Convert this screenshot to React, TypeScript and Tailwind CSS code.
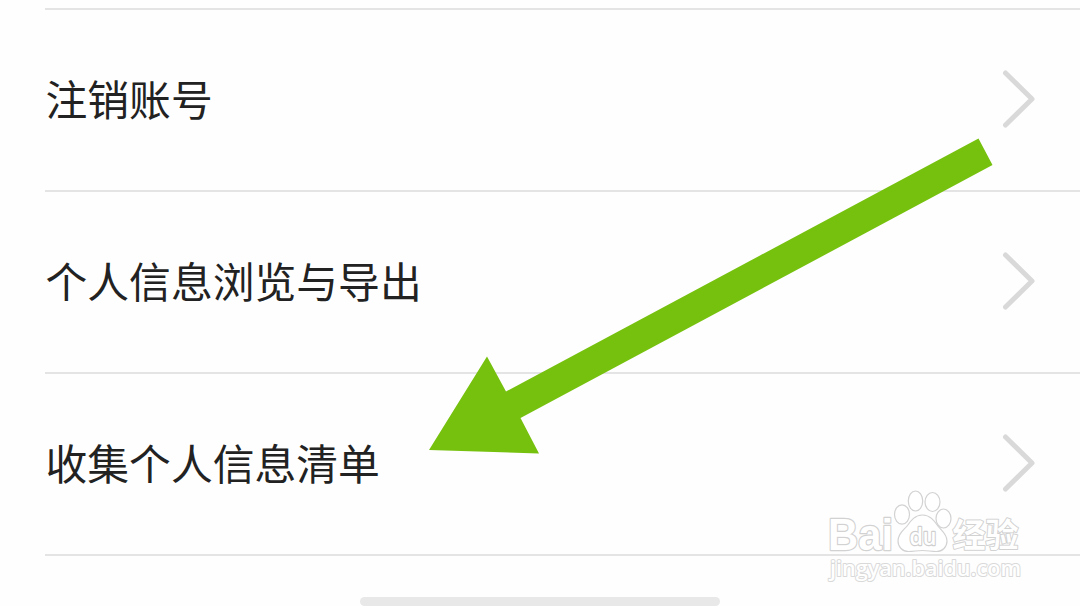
const rows = ["注销账号", "个人信息浏览与导出", "收集个人信息清单"];

function Chevron() {
  return (
    <svg className="w-10 h-16 shrink-0" viewBox="0 0 40 64" fill="none">
      <path
        d="M5.5 5L32 31L5.5 57"
        stroke="#d9d9d9"
        strokeWidth="5"
        strokeLinecap="round"
        strokeLinejoin="round"
      />
    </svg>
  );
}

function Row({ label }: { label: string }) {
  return (
    <div className="flex h-[182px] items-center justify-between border-b-2 border-[#e4e4e4] pr-10">
      <span className="pb-0.5 pl-[0.5px] text-[41.8px] leading-none text-[#222]">
        {label}
      </span>
      <Chevron />
    </div>
  );
}

function Arrow() {
  return (
    <svg
      className="absolute inset-0 h-[606px] w-[1080px]"
      viewBox="0 0 1080 606"
    >
      <path
        d="M429 450L487 356.5L506 391.5L978.5 138.5L992.5 165L520.5 418L539 453.5Z"
        fill="#76c10e"
      />
    </svg>
  );
}

function Watermark() {
  return (
    <svg
      className="absolute left-[810px] top-[480px] h-[110px] w-[230px]"
      viewBox="0 0 230 110"
    >
      <g
        className="font-['Liberation_Sans','Noto_Sans_CJK_SC',sans-serif] font-bold"
        fill="#fff"
        stroke="#d2d2d2"
        strokeWidth="2.4"
        strokeLinejoin="round"
        paintOrder="stroke"
      >
        <text x="18" y="70" fontSize="44" textLength="65" lengthAdjust="spacingAndGlyphs">Bai</text>
        <text x="142.5" y="67" fontSize="33" strokeWidth="2" textLength="66" lengthAdjust="spacingAndGlyphs">经验</text>
      </g>
      <g fill="#fff" stroke="#d2d2d2" strokeWidth="1.2">
        <ellipse cx="92" cy="34.5" rx="7.5" ry="9.7" />
        <ellipse cx="105.5" cy="21" rx="7.2" ry="10" />
        <ellipse cx="122.5" cy="22" rx="7.5" ry="9.5" />
        <ellipse cx="133.5" cy="38.5" rx="7.5" ry="9.5" />
        <path d="M112.5 35C105 35 101 40.5 97.5 45.5C94 50 88 53 88 61C88 67 92.5 71.5 98.5 71.5C104 71.5 107 70.5 112.5 70.5C118 70.5 121 71.5 126.5 71.5C132.5 71.5 137 67 137 61C137 53.5 131 50.5 127.5 45.5C124 40.5 120 35 112.5 35Z" />
      </g>
      <g
        className="font-['Open_Sans',sans-serif]"
        fill="#fff"
        strokeLinejoin="round"
        paintOrder="stroke"
      >
        <text x="99.5" y="65" fontSize="24" fontWeight="600" stroke="#cfcfcf" strokeWidth="2.4" textLength="27" lengthAdjust="spacingAndGlyphs">du</text>
        <text x="20" y="96" fontSize="22" fontWeight="600" stroke="#d9d9d9" strokeWidth="2" textLength="191" lengthAdjust="spacingAndGlyphs">jingyan.baidu.com</text>
      </g>
    </svg>
  );
}

export default function App() {
  return (
    <div className="relative flex h-[606px] w-[1080px] flex-col overflow-hidden bg-[#fefefe] font-['Noto_Sans_CJK_SC',sans-serif]">
      <div className="ml-[45px] mt-2 border-t-2 border-[#e4e4e4]">
        {rows.map((label) => (
          <Row key={label} label={label} />
        ))}
      </div>
      <div className="mx-auto mt-[41px] h-[9px] w-[360px] shrink-0 rounded-full bg-[#e8e8e8]" />
      <Arrow />
      <Watermark />
    </div>
  );
}
